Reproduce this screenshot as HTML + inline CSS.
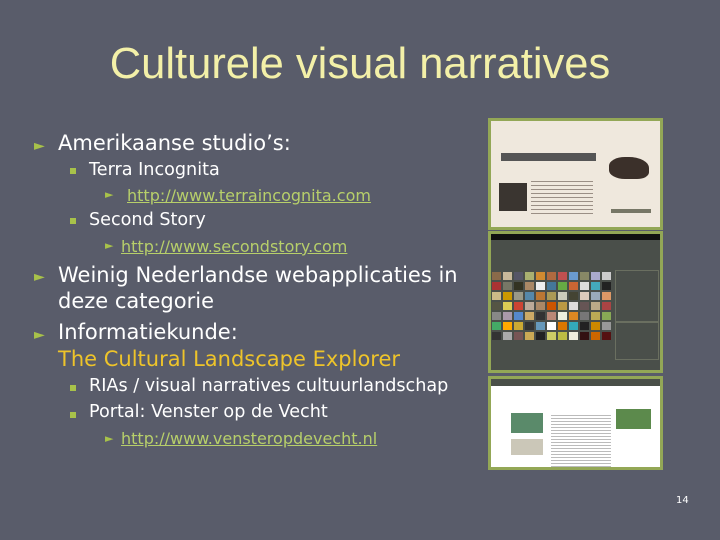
<!DOCTYPE html>
<html><head><style>
body{margin:0;width:720px;height:540px;background:#595c6a;font-family:"DejaVu Sans","Liberation Sans",sans-serif;color:#fff;position:relative;overflow:hidden}
.a{position:absolute;white-space:nowrap}
h1{position:absolute;top:40px;left:0;width:720px;text-align:center;margin:0;font-weight:normal;font-size:43.5px;color:#f3f0a8;font-family:"Liberation Sans",sans-serif}
.l1{font-size:21px}
.l2{font-size:17.6px}
.lk{font-size:16px;color:#b7cf6a;text-decoration:underline}
.tri{color:#a8c24a;font-size:14px}
.sq{display:inline-block;width:6px;height:6px;background:#a8c24a}
.fr{position:absolute;border:3px solid #93a756;box-sizing:border-box}
.g{position:absolute;left:492px;top:272px;width:122px;display:flex;flex-wrap:wrap;gap:2px}
.g div{width:9px;height:8px}
</style></head><body>
<h1>Culturele visual narratives</h1>
<div class="a tri" style="left:34px;top:138px">►</div>
<div class="a l1" style="left:58px;top:131px">Amerikaanse studio’s:</div>
<div class="a sq" style="left:70px;top:168px"></div>
<div class="a l2" style="left:89px;top:160px">Terra Incognita</div>
<div class="a tri" style="left:105px;top:188px;font-size:11px">►</div>
<div class="a lk" style="left:127px;top:186px">http://www.terraincognita.com</div>
<div class="a sq" style="left:70px;top:218px"></div>
<div class="a l2" style="left:89px;top:210px">Second Story</div>
<div class="a tri" style="left:105px;top:239px;font-size:11px">►</div>
<div class="a lk" style="left:121px;top:237px">http://www.secondstory.com</div>
<div class="a tri" style="left:34px;top:269px">►</div>
<div class="a l1" style="left:58px;top:262px;line-height:26px">Weinig Nederlandse webapplicaties in<br>deze categorie</div>
<div class="a tri" style="left:34px;top:327px">►</div>
<div class="a l1" style="left:58px;top:319px;line-height:27px">Informatiekunde:<br><span style="color:#eec42a">The Cultural Landscape Explorer</span></div>
<div class="a sq" style="left:70px;top:385px"></div>
<div class="a l2" style="left:89px;top:376px">RIAs / visual narratives cultuurlandschap</div>
<div class="a sq" style="left:70px;top:412px"></div>
<div class="a l2" style="left:89px;top:402px">Portal: Venster op de Vecht</div>
<div class="a tri" style="left:105px;top:432px;font-size:11px">►</div>
<div class="a lk" style="left:121px;top:429px">http://www.vensteropdevecht.nl</div>
<div class="a" style="left:676px;top:495px;font-size:10px">14</div>

<div class="fr" style="left:488px;top:118px;width:175px;height:112px;background:#efe8dd">
 <div style="position:absolute;left:10px;top:32px;width:95px;height:8px;background:#555"></div>
 <div style="position:absolute;left:8px;top:62px;width:28px;height:28px;background:#3a3530"></div>
 <div style="position:absolute;left:40px;top:60px;width:62px;height:36px;background:repeating-linear-gradient(#9a8f85 0 1px,transparent 1px 4px)"></div>
 <div style="position:absolute;left:118px;top:36px;width:40px;height:22px;background:#3b302a;border-radius:40% 50% 30% 40%"></div>
 <div style="position:absolute;left:120px;top:88px;width:40px;height:4px;background:#776"></div>
</div>
<div class="fr" style="left:488px;top:231px;width:175px;height:142px;background:#4a4f4a">
 <div style="position:absolute;left:0;top:0;width:100%;height:6px;background:#111"></div>
</div>
<div class="g">
<div style="background:#8a6a4a"></div><div style="background:#c9b99a"></div><div style="background:#556"></div><div style="background:#a9b070"></div><div style="background:#d08a30"></div><div style="background:#b06a40"></div><div style="background:#c05050"></div><div style="background:#6a9ad0"></div><div style="background:#886"></div><div style="background:#aac"></div><div style="background:#ccc"></div>
<div style="background:#a33"></div><div style="background:#776"></div><div style="background:#332"></div><div style="background:#a86"></div><div style="background:#eee"></div><div style="background:#479"></div><div style="background:#6a4"></div><div style="background:#c63"></div><div style="background:#ddd"></div><div style="background:#4ab"></div><div style="background:#222"></div>
<div style="background:#cb8"></div><div style="background:#c90"></div><div style="background:#998"></div><div style="background:#58a"></div><div style="background:#b73"></div><div style="background:#a95"></div><div style="background:#ccb"></div><div style="background:#443"></div><div style="background:#dcb"></div><div style="background:#9ab"></div><div style="background:#d96"></div>
<div style="background:#554"></div><div style="background:#dc5"></div><div style="background:#c43"></div><div style="background:#ba9"></div><div style="background:#a86"></div><div style="background:#c50"></div><div style="background:#b94"></div><div style="background:#ddd"></div><div style="background:#655"></div><div style="background:#ba8"></div><div style="background:#a44"></div>
<div style="background:#888"></div><div style="background:#a9a"></div><div style="background:#58c"></div><div style="background:#ca6"></div><div style="background:#333"></div><div style="background:#b87"></div><div style="background:#eed"></div><div style="background:#d82"></div><div style="background:#777"></div><div style="background:#ba5"></div><div style="background:#8a5"></div>
<div style="background:#4a6"></div><div style="background:#fa0"></div><div style="background:#ca3"></div><div style="background:#333"></div><div style="background:#69b"></div><div style="background:#fff"></div><div style="background:#d70"></div><div style="background:#3ab"></div><div style="background:#222"></div><div style="background:#c80"></div><div style="background:#999"></div>
<div style="background:#333"></div><div style="background:#aaa"></div><div style="background:#755"></div><div style="background:#ca5"></div><div style="background:#222"></div><div style="background:#cc6"></div><div style="background:#bb4"></div><div style="background:#eed"></div><div style="background:#311"></div><div style="background:#c60"></div><div style="background:#511"></div>
</div>
<div style="position:absolute;left:615px;top:270px;width:42px;height:50px;border:1px solid #6a6f60"></div>
<div style="position:absolute;left:615px;top:322px;width:42px;height:36px;border:1px solid #6a6f60"></div>
<div class="fr" style="left:488px;top:376px;width:175px;height:94px;background:#fff">
 <div style="position:absolute;left:0;top:0;width:100%;height:7px;background:#4a4f48"></div>
 <div style="position:absolute;left:20px;top:34px;width:32px;height:20px;background:#5a8a6a"></div>
 <div style="position:absolute;left:20px;top:60px;width:32px;height:16px;background:#cbc7b8"></div>
 <div style="position:absolute;left:60px;top:36px;width:60px;height:52px;background:repeating-linear-gradient(#bbb 0 1px,transparent 1px 3px)"></div>
 <div style="position:absolute;left:125px;top:30px;width:35px;height:20px;background:#5c8a4c"></div>
</div>
</body></html>
